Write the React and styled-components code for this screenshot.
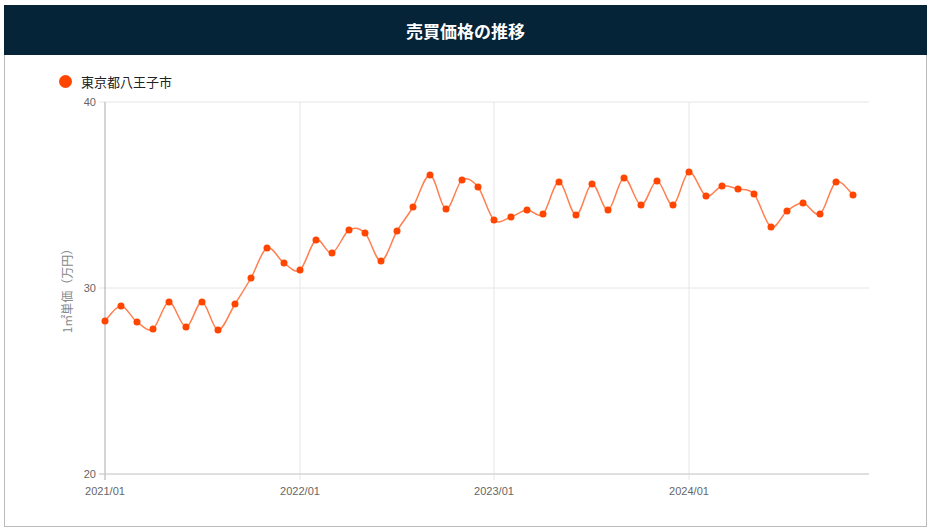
import React from "react";
import styled, { createGlobalStyle } from "styled-components";

const G = createGlobalStyle`
  body { margin: 0; background: #fff; font-family: "Noto Sans CJK JP", "Liberation Sans", sans-serif; }
`;
const Page = styled.div`padding: 5px 4px 0 4px;`;
const Card = styled.div`
  width: 923px; height: 522px; box-sizing: border-box;
  border: 1px solid #bbb; border-top: none; display: flex; flex-direction: column;
`;
const Header = styled.div`
  height: 50px; background: #062437; color: #fff; display: flex;
  align-items: center; justify-content: center; font-size: 17px; font-weight: 700;
  margin: 0 -1px;
`;
const Legend = styled.div`
  display: flex; align-items: center; gap: 9px; padding: 16px 0 0 54px; height: 20px;
  font-size: 13px; color: #222;
`;
const Dot = styled.span`width: 13px; height: 13px; border-radius: 50%; background: #ff4500;`;
const Chart = styled.svg`display: block; flex: 1;`;

const pts = [[105,321],[121,306],[137,322],[153,329],[169,302],[186,327],[202,302],[218,330],[235,304],[251,278],[267,248],[284,263],[300,270],[316,240],[332,253],[349,230],[365,233],[381,261],[397,231],[413,207],[430,175],[446,209],[462,180],[478,187],[494,220],[511,217],[527,210],[543,214],[559,182],[576,215],[592,184],[608,210],[624,178],[641,205],[657,181],[673,205],[689,172],[706,196],[722,186],[738,189],[754,194],[771,227],[787,211],[803,203],[820,214],[836,182],[853,195]];

function path(p) {
  let d = `M${p[0][0]},${p[0][1]}`;
  for (let i = 0; i < p.length - 1; i++) {
    const p0 = p[i - 1] || p[i], p1 = p[i], p2 = p[i + 1], p3 = p[i + 2] || p2;
    const t = 0.5 / 3;
    d += ` C${p1[0] + (p2[0] - p0[0]) * t},${p1[1] + (p2[1] - p0[1]) * t} ${p2[0] - (p3[0] - p1[0]) * t},${p2[1] - (p3[1] - p1[1]) * t} ${p2[0]},${p2[1]}`;
  }
  return d;
}

export default function App() {
  const ys = [[102, "40"], [288, "30"], [474, "20"]];
  const xs = [[105, "2021/01"], [300, "2022/01"], [494, "2023/01"], [689, "2024/01"]];
  return (
    <Page>
      <G />
      <Card>
        <Header>売買価格の推移</Header>
        <Legend><Dot />東京都八王子市</Legend>
        <Chart>
          <g transform="translate(-5,-91)" fontFamily='"Liberation Sans", sans-serif' fontSize="11" fill="#666">
            {ys.map(([y, l]) => (
              <g key={l}>
                <line x1="99" x2="869" y1={y} y2={y} stroke="#e6e6e6" />
                <text x="96" y={y + 4} textAnchor="end">{l}</text>
              </g>
            ))}
            {xs.map(([x, l]) => (
              <g key={l}>
                {x !== 105 && <line x1={x} x2={x} y1="102" y2="480" stroke="#e6e6e6" />}
                <text x={x} y="495" textAnchor="middle">{l}</text>
              </g>
            ))}
            <line x1="105" x2="105" y1="102" y2="480" stroke="#aaa" />
            <line x1="99" x2="869" y1="474" y2="474" stroke="#ccc" />
            <text transform="translate(72,288) rotate(-90)" textAnchor="middle" fontSize="12" fill="#888" fontFamily='"Noto Sans CJK JP", sans-serif'>1㎡単価（万円）</text>
            <path d={path(pts)} fill="none" stroke="#ff7f50" strokeWidth="1.5" />
            {pts.map(([x, y], i) => <circle key={i} cx={x} cy={y} r="3.5" fill="#ff4500" />)}
          </g>
        </Chart>
      </Card>
    </Page>
  );
}
